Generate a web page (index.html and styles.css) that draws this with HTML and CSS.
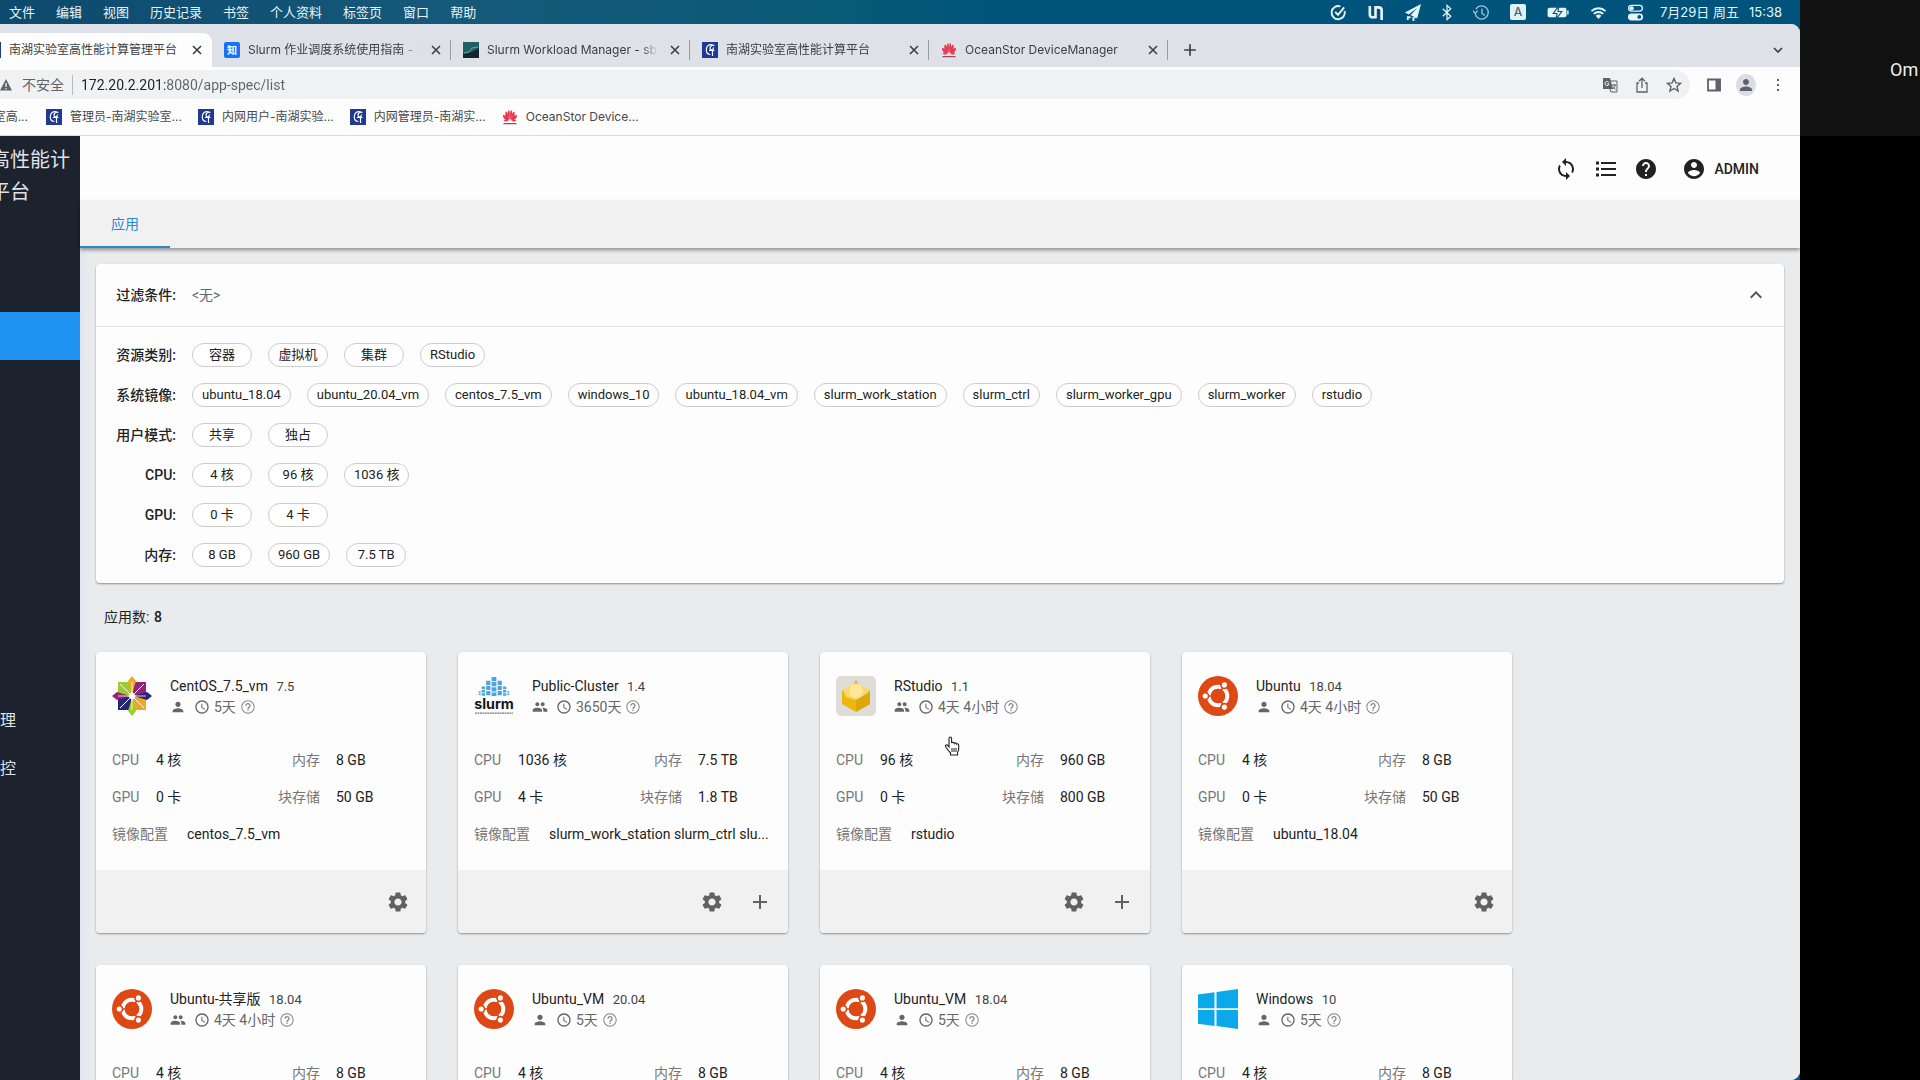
FILE: index.html
```html
<!DOCTYPE html>
<html lang="zh-CN">
<head>
<meta charset="utf-8">
<title>南湖实验室高性能计算管理平台</title>
<link rel="stylesheet" href="styles.css">
</head>
<body>
<svg class="sprite" aria-hidden="true">
  <symbol id="i-close" viewBox="0 0 10 10"><path d="M1 1l8 8M9 1L1 9" stroke="currentColor" stroke-width="1.6" fill="none"/></symbol>
  <symbol id="i-down" viewBox="0 0 10 10"><path d="M1 3l4 4 4-4" stroke="currentColor" stroke-width="1.7" fill="none"/></symbol>
  <symbol id="i-add" viewBox="0 0 24 24"><path fill="currentColor" d="M19 13h-6v6h-2v-6H5v-2h6V5h2v6h6v2z"/></symbol>
  <symbol id="i-gear" viewBox="0 0 24 24"><path fill="currentColor" d="M19.14 12.94c.04-.3.06-.61.06-.94 0-.32-.02-.64-.07-.94l2.03-1.58c.18-.14.23-.41.12-.61l-1.92-3.32c-.12-.22-.37-.29-.59-.22l-2.39.96c-.5-.38-1.03-.7-1.62-.94l-.36-2.54c-.04-.24-.24-.41-.48-.41h-3.84c-.24 0-.43.17-.47.41l-.36 2.54c-.59.24-1.13.57-1.62.94l-2.39-.96c-.22-.08-.47 0-.59.22L2.74 8.87c-.12.21-.08.47.12.61l2.03 1.58c-.05.3-.09.63-.09.94s.02.64.07.94l-2.03 1.58c-.18.14-.23.41-.12.61l1.92 3.32c.12.22.37.29.59.22l2.39-.96c.5.38 1.03.7 1.62.94l.36 2.54c.05.24.24.41.48.41h3.84c.24 0 .44-.17.47-.41l.36-2.54c.59-.24 1.13-.56 1.62-.94l2.39.96c.22.08.47 0 .59-.22l1.92-3.32c.12-.22.07-.47-.12-.61l-2.01-1.58zM12 15.6c-1.98 0-3.6-1.62-3.6-3.6s1.62-3.6 3.6-3.6 3.6 1.62 3.6 3.6-1.62 3.6-3.6 3.6z"/></symbol>
  <symbol id="i-person" viewBox="0 0 24 24"><path fill="currentColor" d="M12 12c2.21 0 4-1.79 4-4s-1.79-4-4-4-4 1.79-4 4 1.790 4 4 4zm0 2c-2.670 0-8 1.340-8 4v2h16v-2c0-2.660-5.330-4-8-4z"/></symbol>
  <symbol id="i-people" viewBox="0 0 24 24"><path fill="currentColor" d="M16 11c1.66 0 2.99-1.34 2.99-3S17.66 5 16 5s-3 1.34-3 3 1.34 3 3 3zm-8 0c1.66 0 2.99-1.34 2.99-3S9.66 5 8 5 5 6.34 5 8s1.34 3 3 3zm0 2c-2.33 0-7 1.17-7 3.5V19h14v-2.500c0-2.330-4.670-3.500-7-3.500zm8 0c-.29 0-.62.02-.97.05 1.16.84 1.970 1.970 1.970 3.450V19h6v-2.500c0-2.330-4.670-3.500-7-3.500z"/></symbol>
  <symbol id="i-clock" viewBox="0 0 24 24"><path fill="currentColor" d="M11.99 2C6.470 2 2 6.480 2 12s4.470 10 9.990 10C17.520 22 22 17.520 22 12S17.520 2 11.990 2zM12 20c-4.420 0-8-3.580-8-8s3.580-8 8-8 8 3.580 8 8-3.580 8-8 8zm.5-13H11v6l5.250 3.150.750-1.230-4.500-2.670V7z"/></symbol>
  <symbol id="i-ask" viewBox="0 0 24 24"><path fill="currentColor" d="M11 18h2v-2h-2v2zm1-16C6.480 2 2 6.480 2 12s4.480 10 10 10 10-4.480 10-10S17.520 2 12 2zm0 18.500c-4.700 0-8.500-3.800-8.500-8.500s3.800-8.500 8.500-8.500 8.500 3.800 8.500 8.500-3.800 8.500-8.500 8.500zM12 6c-2.210 0-4 1.790-4 4h2c0-1.100.9-2 2-2s2 .9 2 2c0 2-3 1.750-3 5h2c0-2.250 3-2.500 3-5 0-2.210-1.790-4-4-4z"/></symbol>
  <symbol id="i-help" viewBox="0 0 24 24"><path fill="currentColor" d="M12 2C6.48 2 2 6.48 2 12s4.48 10 10 10 10-4.48 10-10S17.52 2 12 2zm1 17h-2v-2h2v2zm2.07-7.75l-.9.92C13.450 12.900 13 13.500 13 15h-2v-.5c0-1.100.45-2.100 1.170-2.830l1.240-1.260c.370-.36.590-.86.590-1.410 0-1.100-.9-2-2-2s-2 .9-2 2H8c0-2.210 1.790-4 4-4s4 1.790 4 4c0 .88-.36 1.680-.93 2.250z"/></symbol>
  <symbol id="i-sync" viewBox="0 0 24 24"><path fill="currentColor" d="M12 4V1L8 5l4 4V6c3.310 0 6 2.690 6 6 0 1.010-.25 1.970-.7 2.800l1.460 1.460C19.540 15.030 20 13.570 20 12c0-4.420-3.580-8-8-8zm0 14c-3.310 0-6-2.690-6-6 0-1.010.25-1.970.7-2.800L5.240 7.740C4.460 8.970 4 10.430 4 12c0 4.420 3.580 8 8 8v3l4-4-4-4v3z"/></symbol>
  <symbol id="i-list" viewBox="0 0 24 24"><path fill="currentColor" d="M2 4.500h3v3H2zM2 10.500h3v3H2zM2 16.500h3v3H2zM7 5h15v2H7zM7 11h15v2H7zM7 17h15v2H7z"/></symbol>
  <symbol id="i-account" viewBox="0 0 24 24"><path fill="currentColor" d="M12 2C6.480 2 2 6.480 2 12s4.480 10 10 10 10-4.480 10-10S17.520 2 12 2zm0 3c1.660 0 3 1.340 3 3s-1.340 3-3 3-3-1.340-3-3 1.340-3 3-3zm0 14.200c-2.500 0-4.710-1.280-6-3.220.03-1.990 4-3.080 6-3.080 1.990 0 5.970 1.090 6 3.080-1.290 1.940-3.500 3.220-6 3.220z"/></symbol>
  <symbol id="i-lab" viewBox="0 0 16 16"><rect width="16" height="16" fill="#1f3a93"/><path d="M10.500 2.800C7 1.800 4.300 4 4.300 7.500c0 3.500 1.500 5 4 5M12.500 3.500C10 2.500 8 4 8 6.300s3.500 2.200 3.500-.8M7 8.500h5.500M10.500 8.500V14" stroke="#fff" stroke-width="1.200" fill="none"/></symbol>
  <symbol id="i-huawei" viewBox="0 0 16 16"><g fill="#e8384f"><path d="M7.700 11C6 7.500 4.600 3.500 6.900 1 8.100 2.300 8 6 7.700 11z"/><path d="M8.300 11c1.700-3.500 3.100-7.500.8-10C7.900 2.300 8 6 8.300 11z"/><path d="M7.200 11.200C4 9 2.200 5.500 3.800 2.500 5.900 3.600 6.900 7.500 7.200 11.200z"/><path d="M8.800 11.200c3.200-2.200 5-5.700 3.400-8.700C10.100 3.600 9.100 7.500 8.800 11.200z"/><path d="M6.800 11.700C3 11.400.5 8.800 1.100 5.800 3.900 6.300 5.900 8.800 6.800 11.700z"/><path d="M9.200 11.700c3.800-.3 6.300-2.900 5.700-5.900-2.800.5-4.800 3-5.700 5.900z"/><path d="M6.600 12.100c-2 .9-4.200.5-5-1.200 1.600-.3 3.600.2 5 1.200zM9.400 12.100c2 .9 4.200.5 5-1.200-1.600-.3-3.600.2-5 1.200z"/></g><path d="M1.500 14.700h13" stroke="#a3474f" stroke-width="1.300"/></symbol>
  <symbol id="l-ubuntu" viewBox="0 0 40 40"><circle cx="20" cy="20" r="20" fill="#dd4814"/><circle cx="20" cy="20" r="9.300" fill="none" stroke="#fff" stroke-width="4"/><g stroke="#dd4814" stroke-width="1.700"><path d="M20 20L4 20M20 20L28 6M20 20l8 14"/><circle cx="7.200" cy="20" r="3.400" fill="#fff"/><circle cx="26.400" cy="8.900" r="3.400" fill="#fff"/><circle cx="26.400" cy="31.100" r="3.400" fill="#fff"/></g><circle cx="20" cy="20" r="7.200" fill="#dd4814"/></symbol>
  <symbol id="l-centos" viewBox="0 0 40 40"><path d="M6 6h13v13H6z" fill="#9ccd2a"/><path d="M21 6h13v13H21z" fill="#932279"/><path d="M6 21h13v13H6z" fill="#262577"/><path d="M21 21h13v13H21z" fill="#efa724"/><path d="M20 0l4 5-4 13-4-13z" fill="#efa724"/><path d="M20 40l4-5-4-13-4 13z" fill="#9ccd2a"/><path d="M0 20l5-4 13 4-13 4z" fill="#932279"/><path d="M40 20l-5-4-13 4 13 4z" fill="#262577"/><path d="M8 8l24 24M32 8L8 32" stroke="#fff" stroke-width="1"/><path d="M20 6v28M6 20h28" stroke="#fff" stroke-width=".8"/><circle cx="20" cy="20" r="3" fill="#fff"/></symbol>
  <symbol id="l-slurm" viewBox="0 0 42 40"><g stroke="#4ba6dd" fill="none"><path d="M21 0v20" stroke-width="5" stroke-dasharray="4.400 1"/><path d="M15 4v16M27 4v16" stroke-width="4.500" stroke-dasharray="4.400 1"/><path d="M9.800 10v10M32.200 10v10" stroke-width="3.500" stroke-dasharray="2.600 1"/><path d="M6 15v5M36 15v5" stroke-width="2" stroke-dasharray="1.500 1"/></g><text x="21" y="34" text-anchor="middle" class="slurm-word">slurm</text><path d="M1 38h40" stroke="#777" stroke-width="1.500" stroke-dasharray="2 .6"/></symbol>
  <symbol id="l-rstudio" viewBox="0 0 40 40"><rect width="40" height="40" rx="5" fill="#deddd9"/><path d="M6 15l14-8 14 8v13l-14 8-14-8z" fill="#edb80d"/><path d="M7 14l13-8 13 8-3 7-10 3-10-3z" fill="#f8d967"/><path d="M20 24v12l14-8V16z" fill="#dfa80a"/><circle cx="20" cy="15" r="7" fill="#fbe69a"/><circle cx="20" cy="6" r="1.500" fill="#c9b83c"/></symbol>
  <symbol id="l-windows" viewBox="0 0 40 40"><path fill="#0ca9ea" d="M0 5.500L16.500 3.200v16H0zM18.500 3L40 0v19.200H18.500zM0 21h16.500v16L0 34.700zM18.500 21H40v19l-21.500-3z"/></symbol>
</svg>

<div class="screen">
  <nav class="menubar">
    <ul class="menus"><li>文件</li><li>编辑</li><li>视图</li><li>历史记录</li><li>书签</li><li>个人资料</li><li>标签页</li><li>窗口</li><li>帮助</li></ul>
    <div class="tray">
      <svg viewBox="0 0 18 18"><path d="M15.500 7.500A7 7 0 1 1 11 2.500M5.500 8.500l3 3 6.500-8" stroke="currentColor" stroke-width="2" fill="none"/></svg>
      <svg viewBox="0 0 18 18"><path d="M3 2v9q0 3 3 3h3V3.500h3q3.500 0 3.500 3V17" stroke="currentColor" stroke-width="2.800" fill="none"/></svg>
      <svg viewBox="0 0 18 18"><path fill="currentColor" d="M18 0L1 9l4 2 9-7-7 8 7 3zM3 13h4v2H5v2H3zM8 14h5v1H11v3H9v-3z"/></svg>
      <svg class="slim" viewBox="0 0 12 18"><path d="M1.500 5l8.500 8-4 3.500v-15L10 5l-8.500 8" stroke="currentColor" stroke-width="1.300" fill="none"/></svg>
      <svg viewBox="0 0 18 18" class="dim"><path d="M3 5.500A7 7 0 1 1 2.200 10M0 7l2.500 3L5 7M9.500 5v5l3 2" stroke="currentColor" stroke-width="1.400" fill="none"/></svg>
      <b class="ime">A</b>
      <svg class="wide" viewBox="0 0 24 18"><rect x="1" y="4" width="20" height="10" rx="2" fill="currentColor"/><path d="M13 2L7 10h4l-1 6 6-8h-4z" fill="#fff" stroke="#07547a" stroke-width="1.200"/><path d="M22.500 7v4" stroke="currentColor" stroke-width="1.500"/></svg>
      <svg viewBox="0 0 18 18"><path d="M1.500 7.500a11 11 0 0 1 15 0M4 10.500a7 7 0 0 1 10 0" stroke="currentColor" stroke-width="2" fill="none"/><path d="M6 12.500a4.500 4.500 0 0 1 6 0l-3 3.500z" fill="currentColor"/></svg>
      <svg viewBox="0 0 18 18"><rect x="1.700" y="1.500" width="14.600" height="6" rx="3" fill="none" stroke="currentColor" stroke-width="1.400"/><circle cx="5" cy="4.500" r="2.200" fill="currentColor"/><rect x="1" y="10" width="16" height="7.500" rx="3.700" fill="currentColor"/><circle cx="13" cy="13.700" r="2" fill="#07547a"/></svg>
      <div class="clock-text"><span>7月29日 周五</span><span>15:38</span></div>
    </div>
  </nav>

  <div class="browser">
    <div class="tabs">
      <div class="tab active"><svg class="fav"><use href="#i-lab"/></svg><span class="tab-title">南湖实验室高性能计算管理平台</span><button aria-label="关闭"><svg><use href="#i-close"/></svg></button></div>
      <div class="tab"><svg class="fav" viewBox="0 0 16 16"><rect width="16" height="16" rx="2" fill="#1772f6"/><text x="8" y="12" text-anchor="middle" class="zhi">知</text></svg><span class="tab-title">Slurm 作业调度系统使用指南 - 知</span><button aria-label="关闭"><svg><use href="#i-close"/></svg></button></div>
      <div class="tab"><svg class="fav" viewBox="0 0 16 16"><rect width="16" height="16" fill="#14262c"/><path d="M0 0h16v6L9 10 0 12z" fill="#1f5f66"/><path d="M1 11l5-1 3-4 6-1" stroke="#5fb2a8" fill="none"/></svg><span class="tab-title">Slurm Workload Manager - sba</span><button aria-label="关闭"><svg><use href="#i-close"/></svg></button></div>
      <div class="tab"><svg class="fav"><use href="#i-lab"/></svg><span class="tab-title">南湖实验室高性能计算平台</span><button aria-label="关闭"><svg><use href="#i-close"/></svg></button></div>
      <div class="tab"><svg class="fav"><use href="#i-huawei"/></svg><span class="tab-title">OceanStor DeviceManager</span><button aria-label="关闭"><svg><use href="#i-close"/></svg></button></div>
      <button class="new-tab" aria-label="新标签页"><svg><use href="#i-add"/></svg></button>
      <button class="tab-search" aria-label="搜索标签页"><svg><use href="#i-down"/></svg></button>
    </div>
    <div class="toolbar">
      <div class="omnibox">
        <svg class="warn" viewBox="0 0 12 12"><path d="M6 0l6 11.500H0z" fill="#5f6368"/><path d="M6 4v4M6 9v1.300" stroke="#fff" stroke-width="1.200"/></svg>
        <label for="url">不安全</label>
        <input id="url" value="172.20.2.201:8080/app-spec/list">
        <button aria-label="翻译"><svg viewBox="0 0 16 16"><path d="M1 1h7l3 11H1z" fill="currentColor"/><path d="M8 4h7v11H9l-1-3M10 8h4M12 7v1M13.500 8q-1 3-3 4M10.800 9.500l2.700 3" stroke="currentColor" fill="none"/><path d="M6.800 5.500A2 2 0 1 0 7 7H5.300" stroke="#fff" fill="none"/></svg></button>
        <button aria-label="分享"><svg viewBox="0 0 16 16"><path d="M5 6H3v9h10V6h-2M8 11V1.500M5 4.200l3-3 3 3" stroke="currentColor" stroke-width="1.300" fill="none"/></svg></button>
        <button aria-label="收藏"><svg viewBox="0 0 16 16"><path d="M8 1.500l1.900 4.400 4.700.4-3.600 3.100 1.100 4.600L8 11.500 3.900 14 5 9.400 1.400 6.300l4.700-.4z" stroke="currentColor" stroke-width="1.400" fill="none"/></svg></button>
      </div>
      <button aria-label="侧边栏"><svg viewBox="0 0 16 16"><path d="M2 2.500h12v11H2z" stroke="currentColor" stroke-width="1.800" fill="none"/><path d="M9.500 2h5v12h-5z" fill="currentColor"/></svg></button>
      <button class="profile" aria-label="用户"><svg><use href="#i-person"/></svg></button>
      <button aria-label="更多"><svg viewBox="0 0 16 16"><path fill="currentColor" d="M7 2h2v2H7zM7 7h2v2H7zM7 12h2v2H7z"/></svg></button>
    </div>
    <div class="bookmarks">
      <a href="#" class="cut">室高...</a>
      <a href="#"><svg class="fav"><use href="#i-lab"/></svg><span>管理员-南湖实验室...</span></a>
      <a href="#"><svg class="fav"><use href="#i-lab"/></svg><span>内网用户-南湖实验...</span></a>
      <a href="#"><svg class="fav"><use href="#i-lab"/></svg><span>内网管理员-南湖实...</span></a>
      <a href="#"><svg class="fav"><use href="#i-huawei"/></svg><span>OceanStor Device...</span></a>
    </div>

    <div class="app">
      <aside class="sidebar">
        <h1>高性能计<br>平台</h1>
        <a href="#" class="current" aria-label="应用"></a>
        <div class="more"><a href="#">管理</a><a href="#">监控</a></div>
      </aside>
      <main>
        <header class="appbar">
          <button aria-label="刷新"><svg><use href="#i-sync"/></svg></button>
          <button aria-label="列表"><svg><use href="#i-list"/></svg></button>
          <button aria-label="帮助"><svg><use href="#i-help"/></svg></button>
          <button class="user"><svg><use href="#i-account"/></svg>ADMIN</button>
        </header>
        <nav class="apptabs"><a href="#">应用</a></nav>
        <div class="content">
          <section class="filter">
            <div class="filter-head"><span class="name">过滤条件:</span><span class="none">&lt;无&gt;</span><button aria-label="收起"><svg viewBox="0 0 24 24"><path fill="currentColor" d="M12 8l-6 6 1.410 1.410L12 10.830l4.590 4.580L18 14z"/></svg></button></div>
            <div class="filter-rows">
              <div class="row"><span class="name">资源类别:</span><button>容器</button><button>虚拟机</button><button>集群</button><button>RStudio</button></div>
              <div class="row"><span class="name">系统镜像:</span><button>ubuntu_18.04</button><button>ubuntu_20.04_vm</button><button>centos_7.5_vm</button><button>windows_10</button><button>ubuntu_18.04_vm</button><button>slurm_work_station</button><button>slurm_ctrl</button><button>slurm_worker_gpu</button><button>slurm_worker</button><button>rstudio</button></div>
              <div class="row"><span class="name">用户模式:</span><button>共享</button><button>独占</button></div>
              <div class="row"><span class="name">CPU:</span><button>4 核</button><button>96 核</button><button>1036 核</button></div>
              <div class="row"><span class="name">GPU:</span><button>0 卡</button><button>4 卡</button></div>
              <div class="row"><span class="name">内存:</span><button>8 GB</button><button>960 GB</button><button>7.5 TB</button></div>
            </div>
          </section>
          <p class="count">应用数: <b>8</b></p>
          <div class="cards">
            <article>
              <div class="body">
                <div class="head"><svg class="logo"><use href="#l-centos"/></svg><div><h2>CentOS_7.5_vm <small>7.5</small></h2><p><svg><use href="#i-person"/></svg><svg class="clock"><use href="#i-clock"/></svg>5天<svg class="ask"><use href="#i-ask"/></svg></p></div></div>
                <dl><dt>CPU</dt><dd>4 核</dd><dt>内存</dt><dd>8 GB</dd><dt>GPU</dt><dd>0 卡</dd><dt>块存储</dt><dd>50 GB</dd></dl>
                <dl class="image"><dt>镜像配置</dt><dd>centos_7.5_vm</dd></dl>
              </div>
              <footer><button aria-label="设置"><svg><use href="#i-gear"/></svg></button></footer>
            </article>
            <article>
              <div class="body">
                <div class="head"><svg class="logo"><use href="#l-slurm"/></svg><div><h2>Public-Cluster <small>1.4</small></h2><p><svg><use href="#i-people"/></svg><svg class="clock"><use href="#i-clock"/></svg>3650天<svg class="ask"><use href="#i-ask"/></svg></p></div></div>
                <dl><dt>CPU</dt><dd>1036 核</dd><dt>内存</dt><dd>7.5 TB</dd><dt>GPU</dt><dd>4 卡</dd><dt>块存储</dt><dd>1.8 TB</dd></dl>
                <dl class="image"><dt>镜像配置</dt><dd>slurm_work_station slurm_ctrl slu...</dd></dl>
              </div>
              <footer><button aria-label="设置"><svg><use href="#i-gear"/></svg></button><button aria-label="添加"><svg><use href="#i-add"/></svg></button></footer>
            </article>
            <article>
              <div class="body">
                <div class="head"><svg class="logo"><use href="#l-rstudio"/></svg><div><h2>RStudio <small>1.1</small></h2><p><svg><use href="#i-people"/></svg><svg class="clock"><use href="#i-clock"/></svg>4天 4小时<svg class="ask"><use href="#i-ask"/></svg></p></div></div>
                <dl><dt>CPU</dt><dd>96 核</dd><dt>内存</dt><dd>960 GB</dd><dt>GPU</dt><dd>0 卡</dd><dt>块存储</dt><dd>800 GB</dd></dl>
                <dl class="image"><dt>镜像配置</dt><dd>rstudio</dd></dl>
              </div>
              <footer><button aria-label="设置"><svg><use href="#i-gear"/></svg></button><button aria-label="添加"><svg><use href="#i-add"/></svg></button></footer>
              <svg class="pointer" viewBox="0 0 16 20"><path d="M5 11V2.500q0-1.500 1.300-1.500t1.300 1.500V7q.3-.8 1.300-.8t1.300 1.200q.3-.6 1.200-.5t1.200 1.200q.3-.4 1-.3t1.100 1.200V13q0 2-1.200 3.500V19H6.500v-2Q4 14.500 1.500 10.500 1 9.500 2 9t2 .7z" fill="#fff" stroke="#222" stroke-width="1.100"/><path d="M8 12v4M10 12v4M12 12v4" stroke="#222"/></svg>
            </article>
            <article>
              <div class="body">
                <div class="head"><svg class="logo"><use href="#l-ubuntu"/></svg><div><h2>Ubuntu <small>18.04</small></h2><p><svg><use href="#i-person"/></svg><svg class="clock"><use href="#i-clock"/></svg>4天 4小时<svg class="ask"><use href="#i-ask"/></svg></p></div></div>
                <dl><dt>CPU</dt><dd>4 核</dd><dt>内存</dt><dd>8 GB</dd><dt>GPU</dt><dd>0 卡</dd><dt>块存储</dt><dd>50 GB</dd></dl>
                <dl class="image"><dt>镜像配置</dt><dd>ubuntu_18.04</dd></dl>
              </div>
              <footer><button aria-label="设置"><svg><use href="#i-gear"/></svg></button></footer>
            </article>
            <article>
              <div class="body">
                <div class="head"><svg class="logo"><use href="#l-ubuntu"/></svg><div><h2>Ubuntu-共享版 <small>18.04</small></h2><p><svg><use href="#i-people"/></svg><svg class="clock"><use href="#i-clock"/></svg>4天 4小时<svg class="ask"><use href="#i-ask"/></svg></p></div></div>
                <dl><dt>CPU</dt><dd>4 核</dd><dt>内存</dt><dd>8 GB</dd></dl>
              </div>
            </article>
            <article>
              <div class="body">
                <div class="head"><svg class="logo"><use href="#l-ubuntu"/></svg><div><h2>Ubuntu_VM <small>20.04</small></h2><p><svg><use href="#i-person"/></svg><svg class="clock"><use href="#i-clock"/></svg>5天<svg class="ask"><use href="#i-ask"/></svg></p></div></div>
                <dl><dt>CPU</dt><dd>4 核</dd><dt>内存</dt><dd>8 GB</dd></dl>
              </div>
            </article>
            <article>
              <div class="body">
                <div class="head"><svg class="logo"><use href="#l-ubuntu"/></svg><div><h2>Ubuntu_VM <small>18.04</small></h2><p><svg><use href="#i-person"/></svg><svg class="clock"><use href="#i-clock"/></svg>5天<svg class="ask"><use href="#i-ask"/></svg></p></div></div>
                <dl><dt>CPU</dt><dd>4 核</dd><dt>内存</dt><dd>8 GB</dd></dl>
              </div>
            </article>
            <article>
              <div class="body">
                <div class="head"><svg class="logo"><use href="#l-windows"/></svg><div><h2>Windows <small>10</small></h2><p><svg><use href="#i-person"/></svg><svg class="clock"><use href="#i-clock"/></svg>5天<svg class="ask"><use href="#i-ask"/></svg></p></div></div>
                <dl><dt>CPU</dt><dd>4 核</dd><dt>内存</dt><dd>8 GB</dd></dl>
              </div>
            </article>
          </div>
        </div>
      </main>
    </div>
  </div>
</div>
<aside class="meeting"><div>Om</div></aside>
</body>
</html>
```
FILE: styles.css
```css
* { box-sizing: border-box; }
body { margin: 0; height: 100vh; display: flex; overflow: hidden; background: #000; color: #222; font: 14px/20px Roboto, "Noto Sans CJK SC", sans-serif; }
button { border: 0; padding: 0; background: none; color: inherit; font: inherit; display: flex; align-items: center; justify-content: center; }
a { color: inherit; text-decoration: none; }
h1, h2, p, ul, dl, dd { margin: 0; padding: 0; font-weight: 400; }
svg { flex: none; display: block; }
.sprite { position: absolute; width: 0; height: 0; }
.screen { flex: 1; min-width: 0; display: flex; flex-direction: column; background: #07547a; }

.menubar { height: 24px; flex: none; display: flex; justify-content: space-between; align-items: center; padding: 0 18px 0 9px; color: #e6f4fa; font: 13px/20px Inter, "Noto Sans CJK SC", sans-serif; background: linear-gradient(90deg, #0d4a6d, #16597a 25%, #075a75 48%, #00547b 55%); }
.menus { display: flex; gap: 21px; list-style: none; }
.tray { display: flex; align-items: center; gap: 20px; white-space: nowrap; }
.tray svg { width: 17px; height: 17px; }
.tray .slim { width: 12px; }
.tray .wide { width: 24px; }
.tray .dim { opacity: .7; }
.clock-text { display: flex; gap: 10px; margin-left: -4px; }
.ime { width: 16px; height: 16px; border-radius: 2px; background: #e0f2f8; color: #4a6470; font: 500 12px/16px Inter, sans-serif; text-align: center; }

.browser { flex: 1; min-height: 0; display: flex; flex-direction: column; background: #fdfdfe; border-radius: 0 9px 9px 0; overflow: hidden; }
.tabs { height: 43px; flex: none; display: flex; align-items: center; padding: 9px 17px 0 0; background: #dee1e8; font: 12px/16px Inter, "Noto Sans CJK SC", sans-serif; color: #3c4043; }
.tab { width: 239px; height: 34px; display: flex; align-items: center; padding: 0 10px 0 12px; background: linear-gradient(#999ca3, #999ca3) right center / 1px 20px no-repeat; }
.tab.active { width: 212px; padding: 0 10px 0 0; background: #fdfdfe; border-radius: 0 9px 0 0; }
.tab.active .fav { margin-left: -15px; }
.fav { width: 16px; height: 16px; }
.tab-title { flex: 1; min-width: 0; margin: 0 12px 0 8px; white-space: nowrap; overflow: hidden; mask-image: linear-gradient(90deg, #000 90%, transparent); }
.tab.active .tab-title { margin-right: 8px; mask-image: none; }
.tab svg:not(.fav), .tab-search svg { width: 10px; height: 10px; }
.new-tab { margin-left: 12px; }
.new-tab svg { width: 20px; height: 20px; }
.tab-search { margin-left: auto; }
.zhi { font: 700 10px "Noto Sans CJK SC", sans-serif; fill: #fff; }

.toolbar { height: 35px; flex: none; display: flex; align-items: center; gap: 16px; padding: 0 14px 0 0; color: #5f6368; }
.toolbar svg { width: 16px; height: 16px; }
.omnibox { flex: 1; height: 29px; display: flex; align-items: center; gap: 16px; padding-right: 8px; border-radius: 0 15px 15px 0; background: #eff1f2; }
.omnibox .warn { width: 12px; height: 12px; }
.omnibox label { margin-left: -6px; padding-right: 8px; border-right: 1px solid #b8babd; }
#url { flex: 1; margin-left: -8px; padding: 0; border: 0; outline: 0; background: linear-gradient(90deg, #202124 84px, #5f6368 84px) text; color: transparent; font: 14px/20px Roboto, sans-serif; }
.profile { width: 20px; height: 22px; margin: 0 -2px; border-radius: 50%; background: #dadce8; }
.toolbar > .profile svg { width: 18px; height: 18px; }

.bookmarks { height: 34px; flex: none; display: flex; align-items: center; gap: 16px; padding-bottom: 3px; border-bottom: 1px solid #dcdcde; font: 12px/16px Inter, "Noto Sans CJK SC", sans-serif; color: #45484b; white-space: nowrap; }
.bookmarks a { display: flex; align-items: center; gap: 8px; }
.bookmarks .cut { width: 28px; margin-right: 2px; justify-content: flex-end; }

.app { flex: 1; min-height: 0; display: flex; }
.sidebar { width: 80px; flex: none; overflow: hidden; background: #1c222e; color: #dfe2e8; }
.sidebar h1 { margin: 8px 0 0 -10px; height: 168px; font-size: 20px; line-height: 32px; white-space: nowrap; }
.sidebar a { display: block; height: 48px; font-size: 16px; line-height: 48px; }
.sidebar .current { background: #1e93f2; }
.more { margin: 337px 0 0 -16px; }

main { flex: 1; min-width: 0; display: flex; flex-direction: column; background: #e9ebec; }
.appbar { height: 65px; flex: none; display: flex; align-items: center; justify-content: flex-end; gap: 16px; padding-right: 41px; background: #fdfdfe; }
.appbar svg { width: 24px; height: 24px; }
.user { gap: 8px; margin-left: 8px; font-weight: 500; }
.apptabs { height: 47px; flex: none; display: flex; background: #f1f1f1; box-shadow: 0 2px 4px rgba(0, 0, 0, .4); z-index: 1; }
.apptabs a { width: 90px; text-align: center; line-height: 46px; border-bottom: 2px solid #2b87c6; color: #2a88d8; }
.content { flex: 1; min-height: 0; padding: 16px 16px 0; overflow: hidden; box-shadow: inset 8px 0 6px -4px #e1e5f2; }

.filter, article { background: #fdfdfe; border-radius: 4px; box-shadow: 0 1px 2px rgba(0, 0, 0, .4); }
.name { width: 80px; text-align: right; font-weight: 500; }
.filter-head { height: 63px; display: flex; align-items: center; gap: 16px; padding-right: 16px; border-bottom: 1px solid #e2e2e3; }
.none { color: #666; }
.filter-head button { margin-left: auto; color: #555; }
.filter-head svg { width: 24px; height: 24px; }
.filter-rows { display: flex; flex-direction: column; gap: 16px; padding: 16px 0; }
.row { display: flex; gap: 16px; line-height: 24px; }
.row button { min-width: 60px; height: 24px; padding: 0 9px; border: 1px solid #ccc; border-radius: 12px; font-size: 13px; background: #fff; }
.count { margin: 24px 8px 25px; }
.count b { margin-left: 1px; font-weight: 500; }

.cards { display: grid; grid-template-columns: repeat(auto-fill, 330px); gap: 32px; }
article { position: relative; min-height: 280px; overflow: hidden; }
.body { padding: 24px 16px 25px; }
.head { display: flex; gap: 18px; margin-bottom: 33px; }
.logo { width: 40px; height: 40px; }
h2 { font-size: 14px; line-height: 20px; }
h2 small { margin-left: 5px; font-size: 13px; color: #444; }
.head p { display: flex; align-items: center; color: #666; }
.head p svg { width: 16px; height: 16px; }
.head p .clock { margin: 0 4px 0 8px; }
.head p .ask { margin-left: 4px; opacity: .8; }
dl { display: grid; grid-template-columns: 28px 106px 42px 1fr; gap: 16px; line-height: 21px; }
dt { color: #777; white-space: nowrap; }
dt:nth-of-type(even) { text-align: right; }
dl.image { grid-template-columns: 59px 1fr; margin-top: 16px; }
dd { white-space: nowrap; }
footer { height: 63px; display: flex; justify-content: flex-end; align-items: center; gap: 24px; padding: 0 16px; background: #f1f1f1; color: #616161; }
footer svg { width: 24px; height: 24px; }
.pointer { position: absolute; left: 124px; top: 84px; width: 16px; height: 20px; }
.slurm-word { font: 700 15px Inter, sans-serif; fill: #151515; }

.meeting { width: 120px; flex: none; overflow: hidden; }
.meeting div { height: 136px; padding-left: 90px; background: #111; color: #eee; font-size: 18px; line-height: 140px; }
```
